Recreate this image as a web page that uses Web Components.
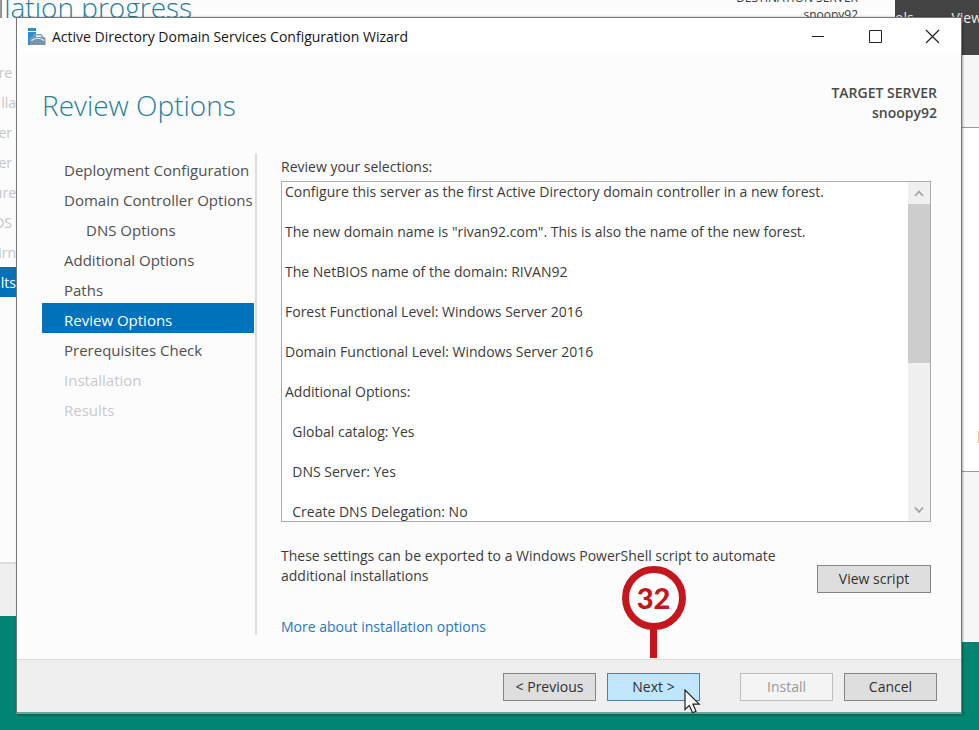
<!DOCTYPE html>
<html lang="en">
<head>
<meta charset="utf-8">
<title>Active Directory Domain Services Configuration Wizard</title>
<style>
html, body { height: 100%; margin: 0; }
body { font: 14px/20px "Open Sans", "Noto Sans", sans-serif; color: #3c3c3c; overflow: hidden; }
</style>
</head>
<body>
<desktop-view></desktop-view>
<script>
class Base extends HTMLElement {
  constructor() {
    super();
    this.attachShadow({ mode: 'open' }).innerHTML =
      '<style>*{box-sizing:border-box}' + this.constructor.css + '</style>' + this.html();
  }
  html() { return this.constructor.markup; }
}

class NavStep extends Base {
  static css = `
    :host { display: block; height: 30px; padding: 5px 0 0 22px; white-space: nowrap; font-size: 15px; line-height: 24px; color: #505050; }
    :host([sub]) { padding-left: 44px; }
    :host([off]) { color: #c9c9cd; }
    :host([current]) { background: #0072bc; color: #fff; }`;
  static markup = '<slot></slot>';
}
customElements.define('nav-step', NavStep);

class WizButton extends HTMLElement {
  connectedCallback() {
    if (this.shadowRoot) return;
    this.attachShadow({ mode: 'open' }).innerHTML = `<style>
      :host { display: block; position: relative; width: 93px; }
      :host([wide]) { width: 114px; }
      button { display: block; box-sizing: border-box; width: 100%; height: 28px; padding: 0; border: 1px solid #858585; background: #dedede; font: inherit; color: #303030; }
      :host([primary]) button { background: #bfe6fd; border-color: #4384b0; }
      button:disabled { background: #f4f4f4; border-color: #bdbdbd; color: #999; }
    </style><button type="button"${this.hasAttribute('off') ? ' disabled' : ''}><slot></slot></button><slot name="over"></slot>`;
  }
}
customElements.define('wiz-button', WizButton);

class StepSign extends Base {
  static css = `
    :host { position: absolute; left: 50%; bottom: 100%; width: 64px; margin: 0 0 15px -32px; display: flex; flex-direction: column; align-items: center; color: #c4161c; pointer-events: none; }
    .ring { width: 64px; height: 64px; border: 7px solid; border-radius: 50%; background: #fff; font: 900 29px/49px Lato, sans-serif; text-align: center; }
    .stem { width: 7px; height: 29px; margin-top: -1px; background: #c4161c; }`;
  static markup = '<div class="ring"><slot></slot></div><div class="stem"></div>';
}
customElements.define('step-sign', StepSign);

class MousePointer extends Base {
  static css = ':host { position: absolute; left: 77px; top: 16px; pointer-events: none; } svg { display: block; }';
  static markup = `<svg width="17" height="25" viewBox="0 0 17 25"><path d="M1 1V20.500L5.300 16.400L8.600 23.800L12 22.300L8.900 15.200H15.200Z" fill="#fff" stroke="#222" stroke-width="1.200"/></svg>`;
}
customElements.define('mouse-pointer', MousePointer);

class WinTitlebar extends Base {
  static css = `
    :host { display: flex; align-items: center; height: 37px; flex: none; background: #fff; color: #161616; padding-left: 11px; }
    .title { flex: 1; margin-left: 6px; white-space: nowrap; }
    button { width: 57px; height: 37px; padding: 0; border: 0; background: none; display: grid; place-items: center; }
    svg { display: block; }`;
  static markup = `
    <svg width="18" height="18" viewBox="0 0 18 18"><path d="M0 0H8V3H0ZM0 4H8V9H5V17H0Z" fill="#2a8fd8"/><path d="M2 10L3.500 9H16L17.500 10V17H2Z" fill="#7795ab"/><path d="M5 9.500L7 6.700H13L15 9.500" fill="none" stroke="#8aa6b8" stroke-width="1.500"/><path d="M4 13V12Q9.800 8.500 15.500 12V13" fill="none" stroke="#dbe6ec" stroke-width="1.200"/></svg>
    <span class="title"><slot></slot></span>
    <button type="button" aria-label="Minimize"><svg width="13" height="13"><path d="M0 6.500H12" stroke="#222"/></svg></button>
    <button type="button" aria-label="Maximize"><svg width="13" height="13"><path d="M.5.5H12.500V12.500H.5Z" fill="none" stroke="#222"/></svg></button>
    <button type="button" aria-label="Close"><svg width="15" height="15"><path d="M1 1L14 14M14 1L1 14" stroke="#222" stroke-width="1.200"/></svg></button>`;
}
customElements.define('win-titlebar', WinTitlebar);

class SelectionReview extends Base {
  static css = `
    :host { display: flex; flex-direction: column; flex: 1; min-height: 0; }
    label { height: 24px; line-height: 20px; }
    .box { flex: 1; display: flex; min-height: 0; background: #fff; border: 1px solid #abadb3; }
    textarea { flex: 1; min-width: 0; margin: 0; border: 0; outline: 0; padding: 0 3px; resize: none; overflow: hidden; background: none; font: inherit; color: inherit; }
    .bar { width: 22px; background: #f0f0f0; display: flex; flex-direction: column; }
    .bar svg { display: block; width: 22px; height: 22px; flex: none; }
    .track { flex: 1; }
    .thumb { height: 54%; background: #cdcdcd; }`;
  static markup = `
    <label for="t">Review your selections:</label>
    <div class="box"><textarea id="t" readonly>Configure this server as the first Active Directory domain controller in a new forest.

The new domain name is "rivan92.com". This is also the name of the new forest.

The NetBIOS name of the domain: RIVAN92

Forest Functional Level: Windows Server 2016

Domain Functional Level: Windows Server 2016

Additional Options:

  Global catalog: Yes

  DNS Server: Yes

  Create DNS Delegation: No</textarea>
    <div class="bar" aria-hidden="true">
      <svg viewBox="0 0 22 22"><path d="M7 14L11 9.500L15 14" fill="none" stroke="#a3a3a3" stroke-width="1.800"/></svg>
      <div class="track"><div class="thumb"></div></div>
      <svg viewBox="0 0 22 22"><path d="M7 8.500L11 13L15 8.500" fill="none" stroke="#a3a3a3" stroke-width="1.800"/></svg>
    </div></div>`;
}
customElements.define('selection-review', SelectionReview);

class WizardDialog extends Base {
  static css = `
    :host { display: flex; flex-direction: column; background: #fcfcfc; border: 1px solid #767676; border-bottom-color: #1e5c52; box-shadow: 1px 0 2px #0005; }
    header { display: flex; justify-content: space-between; flex: none; height: 98px; padding: 28px 24px 0 25px; }
    h1 { margin: 0; font-size: 28px; font-weight: 300; line-height: 44px; color: #2a7f9c; white-space: nowrap; }
    .target { text-align: right; font-weight: 600; color: #4a4a4a; }
    .main { flex: 1; display: flex; min-height: 0; padding: 0 30px 24px 25px; }
    nav { width: 215px; flex: none; padding-right: 1px; border-right: 2px solid #dcdcdc; }
    section { flex: 1; min-width: 0; display: flex; flex-direction: column; padding: 4px 0 0 24px; }
    selection-review { margin-bottom: 24px; }
    .export { display: flex; justify-content: space-between; gap: 30px; }
    p { margin: 0; max-width: 510px; }
    wiz-button[wide] { flex: none; margin: 19px 0 -9px; }
    a { margin-top: 31px; color: #2478c0; text-decoration: none; align-self: flex-start; margin-bottom: -2px; }
    footer { flex: none; display: flex; justify-content: flex-end; gap: 11px; height: 55px; padding: 13px 24px 0 0; background: #efefef; border-top: 1px solid #dcdcdc; border-bottom: 2px solid #62a99d; }
    .gap { margin-left: 29px; }`;
  static markup = `
    <win-titlebar>Active Directory Domain Services Configuration Wizard</win-titlebar>
    <header><h1>Review Options</h1><div class="target">TARGET SERVER<br>snoopy92</div></header>
    <div class="main">
      <nav>
        <nav-step>Deployment Configuration</nav-step>
        <nav-step>Domain Controller Options</nav-step>
        <nav-step sub>DNS Options</nav-step>
        <nav-step>Additional Options</nav-step>
        <nav-step>Paths</nav-step>
        <nav-step current>Review Options</nav-step>
        <nav-step>Prerequisites Check</nav-step>
        <nav-step off>Installation</nav-step>
        <nav-step off>Results</nav-step>
      </nav>
      <section>
        <selection-review></selection-review>
        <div class="export"><p>These settings can be exported to a Windows PowerShell script to automate additional installations</p><wiz-button wide>View script</wiz-button></div>
        <a href="#more">More about installation options</a>
      </section>
    </div>
    <footer>
      <wiz-button>&lt; Previous</wiz-button>
      <wiz-button primary>Next &gt;<step-sign slot="over">32</step-sign><mouse-pointer slot="over"></mouse-pointer></wiz-button>
      <wiz-button off class="gap">Install</wiz-button>
      <wiz-button>Cancel</wiz-button>
    </footer>`;
}
customElements.define('wizard-dialog', WizardDialog);

class ProgressWindow extends Base {
  static css = `
    :host { display: flex; flex-direction: column; background: #fcfcfc; overflow: hidden; }
    header { display: flex; justify-content: space-between; align-items: flex-start; flex: none; height: 57px; padding-right: 37px; }
    h2 { margin: -15px 0 0 -17px; font-size: 28px; font-weight: 300; line-height: 44px; color: #2a7f9c; white-space: nowrap; }
    .dest { margin-top: -11px; text-align: right; line-height: 17px; font-size: 12px; font-weight: 500; }
    nav { flex: 1; }
    nav div { height: 30px; width: 16px; display: flex; justify-content: flex-end; line-height: 32px; color: #c6c6c9; white-space: nowrap; overflow: hidden; }
    nav .low { padding-right: 4px; }
    nav .on { background: #0072bc; color: #fff; }
    footer { height: 54px; flex: none; background: #efefef; border-top: 2px solid #dcdcdc; }`;
  static markup = `
    <header><h2>allation progress</h2><div class="dest">DESTINATION SERVER<br>snoopy92</div></header>
    <nav><div class="low">re</div><div>lla</div><div class="low">er</div><div class="low">er</div><div>ure</div><div class="low">DS</div><div>irn</div><div class="on">lts</div></nav>
    <footer></footer>`;
}
customElements.define('progress-window', ProgressWindow);

class ManagerWindow extends Base {
  static css = `
    :host { display: flex; flex-direction: column; background: #f7f7f7; overflow: hidden; }
    .menu { height: 55px; flex: none; display: flex; justify-content: space-between; background: #444; color: #eee; padding-top: 8px; white-space: nowrap; }
    .menu span:last-child { margin-right: -3px; }
    .panel { margin-top: 72px; height: 345px; border: solid #9a9a9a; border-width: 1px 0; background: #fff; display: flex; align-items: flex-end; justify-content: flex-end; padding-bottom: 28px; }
    i { width: 1px; height: 12px; background: #e3c984; }`;
  static markup = '<div class="menu"><span>ols</span><span>View</span></div><div class="panel"><i></i></div>';
}
customElements.define('manager-window', ManagerWindow);

class DesktopView extends Base {
  static css = `
    :host { display: block; position: relative; height: 100%; background: #008573; overflow: hidden; }
    manager-window { position: absolute; inset: 0 0 88px auto; width: 84px; }
    progress-window { position: absolute; inset: 0 84px 114px 0; }
    wizard-dialog { position: absolute; inset: 17px 17px 15px 16px; }`;
  static markup = '<manager-window></manager-window><progress-window></progress-window><wizard-dialog></wizard-dialog>';
}
customElements.define('desktop-view', DesktopView);
</script>
</body>
</html>
